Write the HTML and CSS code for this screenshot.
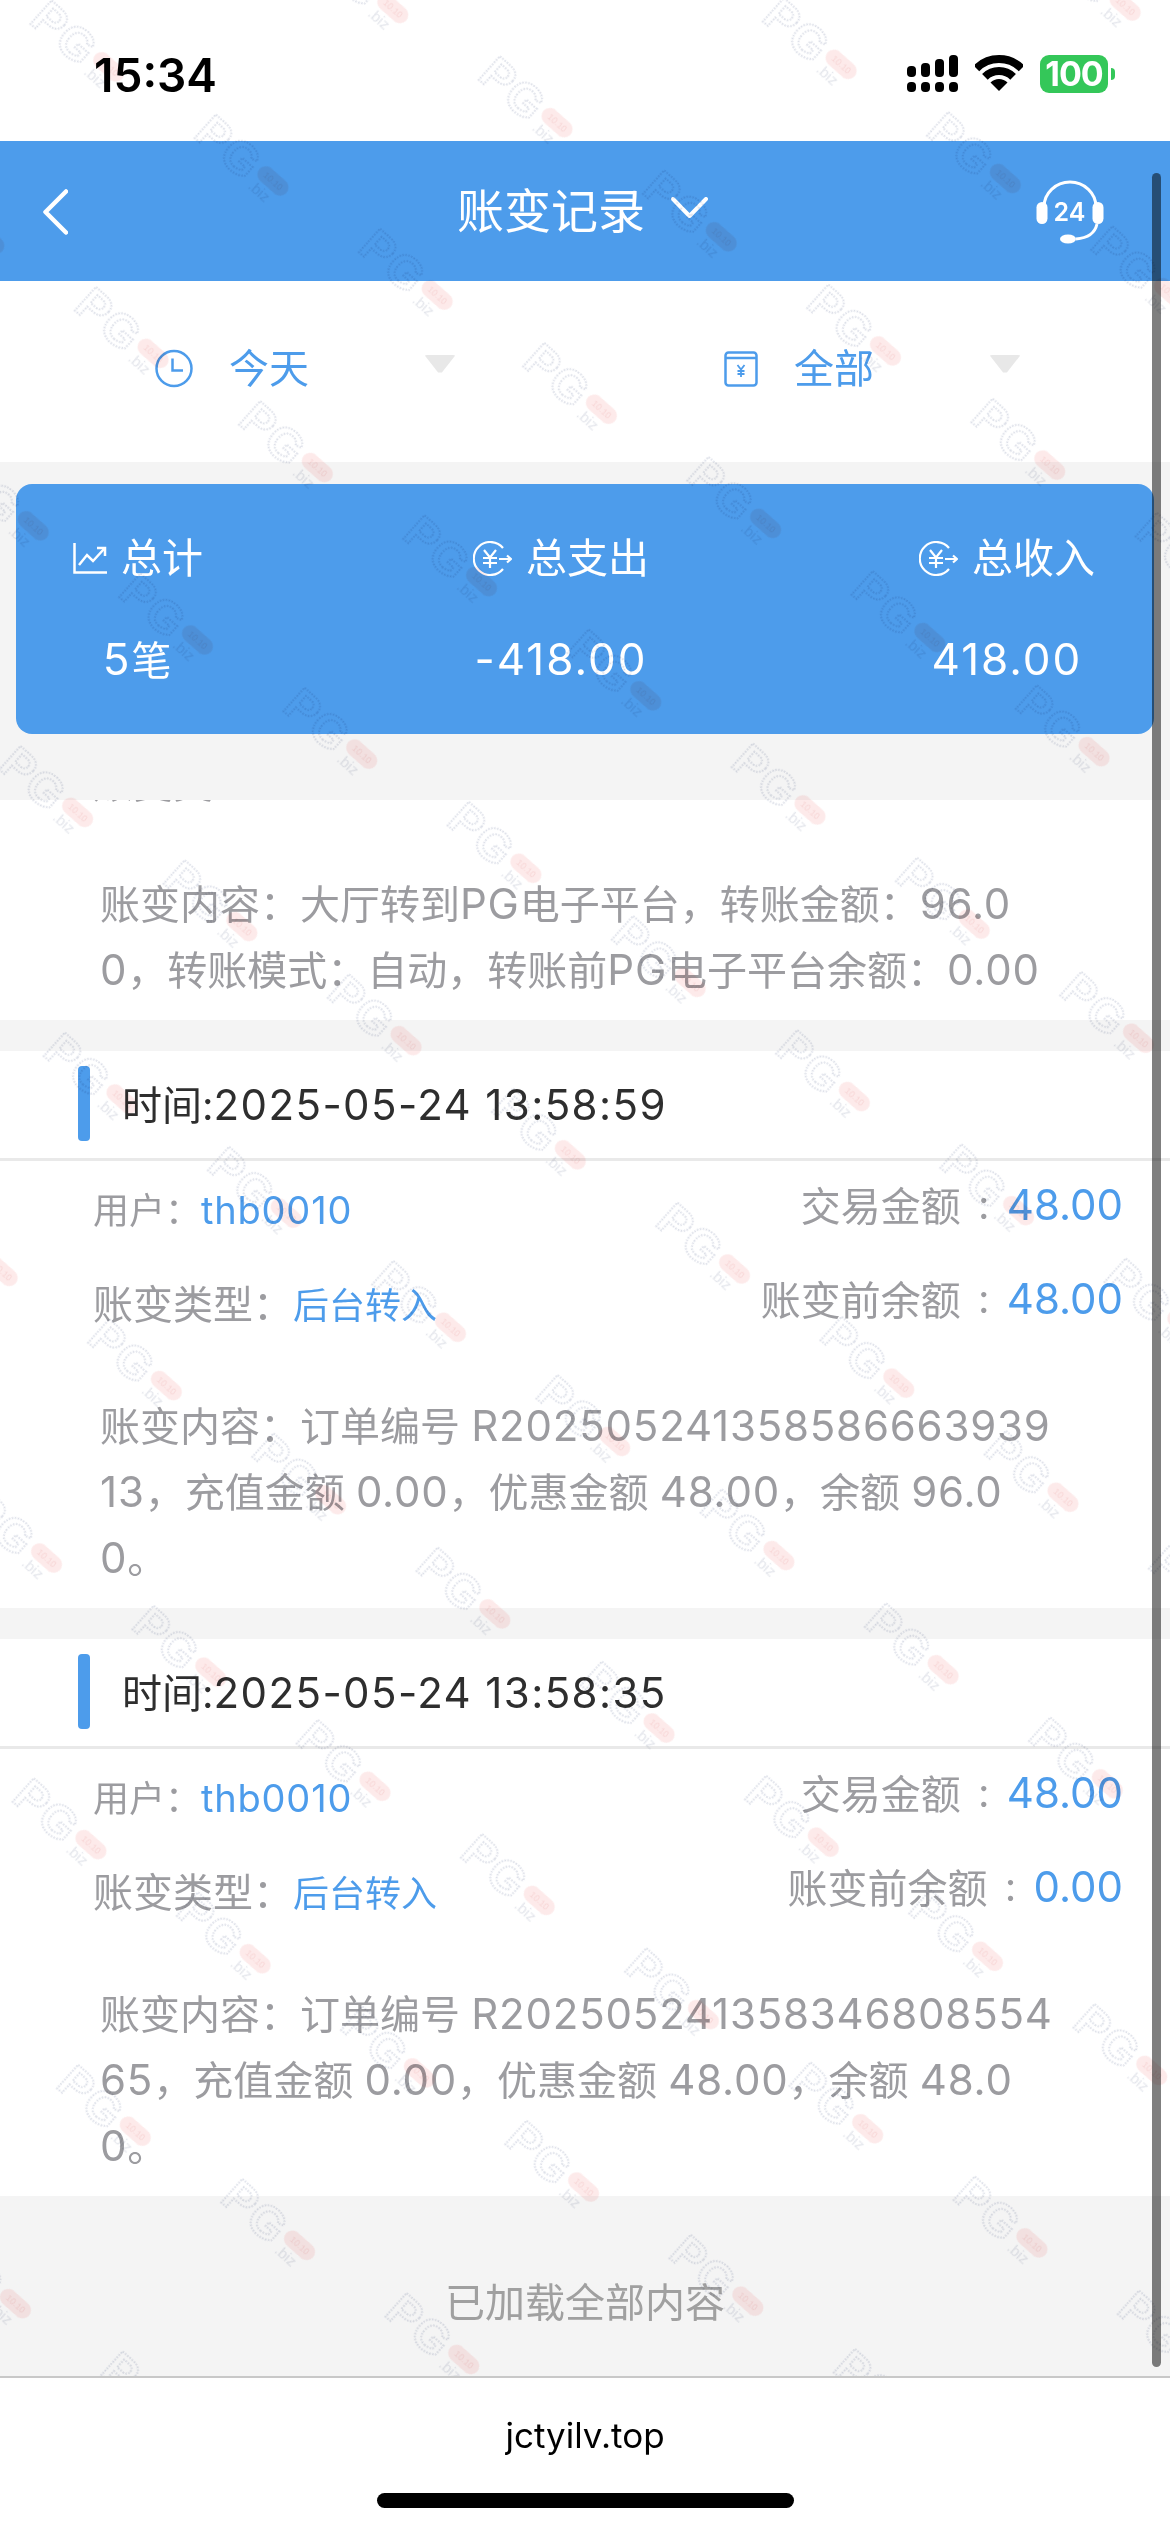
FILE: index.html
```html
<!DOCTYPE html>
<html>
<head>
  <meta charset="UTF-8">
  <meta name="viewport" content="width=device-width, initial-scale=1.0">
  <title>账变记录</title>
  <link rel="stylesheet" href="styles.css">
</head>
<body>
  <div class="phone">
    <div class="status-bar">
      <div class="time">15:34</div>
      <div class="status-icons">
        <svg class="signal" width="51" height="37" viewBox="0 0 51 37" fill="#000">
          <rect x="0" y="11" width="9" height="11" rx="4"/>
          <rect x="14" y="8" width="9" height="14" rx="4"/>
          <rect x="28" y="4" width="9" height="18" rx="4"/>
          <rect x="42" y="0" width="9" height="22" rx="4"/>
          <rect x="0" y="27" width="9" height="10" rx="4"/>
          <rect x="14" y="27" width="9" height="10" rx="4"/>
          <rect x="28" y="27" width="9" height="10" rx="4"/>
          <rect x="42" y="27" width="9" height="10" rx="4"/>
        </svg>
        <svg class="wifi" width="48" height="36" viewBox="0 0 48 36" fill="none" stroke="#000" stroke-width="8">
          <path d="M1.4 13.4A32 32 0 0 1 46.6 13.4"/>
          <path d="M9.9 21.9A20 20 0 0 1 38.1 21.9"/>
          <path d="M24 36L15.5 27.5A12 12 0 0 1 32.5 27.5Z" fill="#000" stroke="none"/>
        </svg>
        <div class="battery">100</div>
        <div class="battery-nub"></div>
      </div>
    </div>

    <div class="header">
      <svg class="back" width="25" height="46" viewBox="0 0 25 46" fill="none" stroke="#fff" stroke-width="4.5" stroke-linecap="round" stroke-linejoin="round">
        <path d="M23 2.5L2.5 23L23 43.5"/>
      </svg>
      <div class="header-title">
        <span>账变记录</span>
        <svg width="37" height="21" viewBox="0 0 37 21" fill="none" stroke="#fff" stroke-width="4" stroke-linecap="round" stroke-linejoin="round">
          <path d="M2 2L18.5 19L35 2"/>
        </svg>
      </div>
      <svg class="support" width="68" height="64" viewBox="0 0 68 64" fill="none" stroke="#fff">
        <path d="M8 32V27A26 25 0 0 1 60 27V32" stroke-width="3"/>
        <rect x="0.5" y="22" width="11" height="22" rx="5.5" fill="#fff" stroke="none"/>
        <rect x="56.5" y="22" width="11" height="22" rx="5.5" fill="#fff" stroke="none"/>
        <path d="M61 44C59 53 52 58 40 59" stroke-width="3"/>
        <ellipse cx="32" cy="59" rx="8" ry="4.5" fill="#fff" stroke="none"/>
        <text x="33.5" y="41" class="support-text">24</text>
      </svg>
    </div>

    <div class="filters">
      <div class="filter">
        <svg width="38" height="39" viewBox="0 0 38 39" fill="none" stroke="#4d9ceb" stroke-width="2.5">
          <circle cx="19" cy="19.5" r="17.5"/>
          <path d="M17.500 9.500V21.500H28"/>
        </svg>
        <span class="filter-text">今天</span>
        <div class="arrow"></div>
      </div>
      <div class="filter">
        <svg width="34" height="36" viewBox="0 0 34 36" fill="none" stroke="#4d9ceb" stroke-width="2.5">
          <rect x="1.500" y="1.500" width="31" height="33" rx="3"/>
          <path d="M1.500 7H32.500"/>
          <path d="M13.500 14L17 18.500L20.500 14M17 18.500V26M13.500 20H20.500M13.500 23H20.500" stroke-width="1.800"/>
        </svg>
        <span class="filter-text">全部</span>
        <div class="arrow"></div>
      </div>
    </div>

    <div class="summary-wrap">
      <div class="summary">
        <div class="summary-col">
          <div class="summary-label">
            <svg width="34" height="31" viewBox="0 0 34 31" fill="none" stroke="#fff" stroke-width="2.500">
              <path d="M1.500 0V29.500H34"/>
              <path d="M6 22L14 12L20 18L31 6"/>
              <path d="M24 5H32V13"/>
            </svg>
            <span>总计</span>
          </div>
          <div class="summary-value">5<span class="unit">笔</span></div>
        </div>
        <div class="summary-col">
          <div class="summary-label">
            <svg width="39" height="35" viewBox="0 0 39 35" fill="none" stroke="#fff" stroke-width="2.200">
              <path d="M30 7A16.500 16.500 0 1 0 30 28"/>
              <path d="M11 9L17 16.500L23 9M17 16.500V27M10 17H24M10 22H24"/>
              <path d="M26 18H37M34 14.500L38 18L34 21.500"/>
            </svg>
            <span>总支出</span>
          </div>
          <div class="summary-value">-418.00</div>
        </div>
        <div class="summary-col">
          <div class="summary-label">
            <svg width="39" height="35" viewBox="0 0 39 35" fill="none" stroke="#fff" stroke-width="2.200">
              <path d="M30 7A16.500 16.500 0 1 0 30 28"/>
              <path d="M11 9L17 16.500L23 9M17 16.500V27M10 17H24M10 22H24"/>
              <path d="M26 18H37M34 14.500L38 18L34 21.500"/>
            </svg>
            <span>总收入</span>
          </div>
          <div class="summary-value">418.00</div>
        </div>
      </div>
    </div>

    <div class="list">
      <div class="card card-cut">
        <div class="cut-label">账变类型：</div>
        <div class="card-content">账变内容：大厅转到<span class="num">PG</span>电子平台，转账金额：<span class="num">96.0</span><br><span class="num">0</span>，转账模式：自动，转账前<span class="num">PG</span>电子平台余额：<span class="num">0.00</span></div>
      </div>

      <div class="card">
        <div class="card-head">
          <div class="accent"></div>
          <div class="card-time">时间:<span class="time-num">2025-05-24 13:58:59</span></div>
        </div>
        <div class="row">
          <div class="row-left"><span class="small-label">用户：</span><span class="user">thb0010</span></div>
          <div class="row-right">交易金额<i>:</i><span class="amount">48.00</span></div>
        </div>
        <div class="row">
          <div class="row-left">账变类型：<span class="blue">后台转入</span></div>
          <div class="row-right">账变前余额<i>:</i><span class="amount">48.00</span></div>
        </div>
        <div class="card-content">账变内容：订单编号 <span class="num">R202505241358586663939</span><br><span class="num">13</span>，充值金额 <span class="num">0.00</span>，优惠金额 <span class="num">48.00</span>，余额 <span class="num">96.0</span><br><span class="num">0</span>。</div>
      </div>

      <div class="card">
        <div class="card-head">
          <div class="accent"></div>
          <div class="card-time">时间:<span class="time-num">2025-05-24 13:58:35</span></div>
        </div>
        <div class="row">
          <div class="row-left"><span class="small-label">用户：</span><span class="user">thb0010</span></div>
          <div class="row-right">交易金额<i>:</i><span class="amount">48.00</span></div>
        </div>
        <div class="row">
          <div class="row-left">账变类型：<span class="blue">后台转入</span></div>
          <div class="row-right">账变前余额<i>:</i><span class="amount">0.00</span></div>
        </div>
        <div class="card-content">账变内容：订单编号 <span class="num">R202505241358346808554</span><br><span class="num">65</span>，充值金额 <span class="num">0.00</span>，优惠金额 <span class="num">48.00</span>，余额 <span class="num">48.0</span><br><span class="num">0</span>。</div>
      </div>

      <div class="load-end">已加载全部内容</div>
    </div>

    <div class="browser-bar">
      <div class="url">jctyilv.top</div>
      <div class="home-bar"></div>
    </div>

    <div class="scrollbar"></div>

    <!-- watermark repeats on a rotated grid over the whole web view -->
    <svg class="watermark" width="1170" height="2376">
      <defs>
        <pattern id="wm" width="200" height="210" patternUnits="userSpaceOnUse" patternTransform="translate(810 810) rotate(34.8) translate(-150 -110)">
          <g transform="translate(150 110) rotate(7)">
            <text x="-90" y="20" class="wm-pg">PG</text>
            <rect x="-18" y="-8.500" width="36" height="17" rx="8.500" fill="#fdeaea"/>
            <text x="-11" y="3" class="wm-pill">10.10</text>
            <text x="-15" y="22" class="wm-biz">.biz</text>
          </g>
        </pattern>
      </defs>
      <rect width="1170" height="2376" fill="url(#wm)"/>
    </svg>
  </div>
</body>
</html>
```

FILE: styles.css
```css
* {
  box-sizing: border-box;
}
body {
  margin: 0;
  font-family: Inter, "Noto Sans CJK SC", sans-serif;
  background: white;
}
.phone {
  position: relative;
  width: 1170px;
  height: 2532px;
  overflow: hidden;
  display: flex;
  flex-direction: column;
}

/* status bar */
.status-bar {
  height: 141px;
  display: flex;
  justify-content: space-between;
  align-items: flex-start;
  padding: 55px 55px 0 94px;
  background: white;
}
.time {
  font-size: 46px;
  font-weight: 600;
  line-height: 40px;
  color: #000;
}
.status-icons {
  display: flex;
  align-items: flex-start;
}
.wifi {
  margin-left: 17px;
}
.battery {
  margin-left: 17px;
  width: 68px;
  height: 38px;
  border-radius: 9px;
  background: #34c759;
  color: white;
  font-size: 34px;
  font-weight: 700;
  letter-spacing: -1px;
  line-height: 38px;
  text-align: center;
}
.battery-nub {
  width: 4px;
  height: 12px;
  margin: 13px 0 0 3px;
  border-radius: 0 6px 6px 0;
  background: #34c759;
}

/* header */
.header {
  height: 140px;
  flex-shrink: 0;
  display: flex;
  align-items: center;
  padding: 0 66px 0 43px;
  background: #4d9ceb;
  color: white;
}
.back {
  margin-top: 1px;
}
.header-title {
  flex: 1;
  display: flex;
  justify-content: center;
  align-items: center;
  gap: 26px;
  font-size: 47px;
  padding: 0 0 8px 61px;
}
.support {
  margin-top: 1px;
}
.support-text {
  font-size: 25px;
  font-weight: 600;
  fill: white;
  stroke: none;
  text-anchor: middle;
}

/* filter row */
.filters {
  height: 181px;
  display: grid;
  grid-template-columns: 569px 1fr;
  padding-left: 155px;
  background: white;
}
.filter {
  display: flex;
  align-items: center;
  color: #4d9ceb;
  font-size: 40px;
  padding-bottom: 6px;
}
.filter-text {
  margin-left: 36px;
  line-height: 60px;
  margin-right: 115px;
}
.arrow {
  width: 32px;
  height: 18px;
  margin-bottom: 10px;
  background: #e8e8e8;
  clip-path: polygon(0 0, 100% 0, 56% 100%, 44% 100%);
  border-radius: 3px;
}

/* summary card */
.summary-wrap {
  height: 338px;
  padding: 22px 16px 0;
  background: #f4f4f4;
}
.summary {
  height: 250px;
  padding: 44px 59px 0 57px;
  display: flex;
  justify-content: space-between;
  border-radius: 16px;
  background: #4d9ceb;
  color: white;
}
.summary-col {
  display: flex;
  flex-direction: column;
  align-items: center;
  gap: 41px;
}
.summary-label {
  display: flex;
  align-items: center;
  gap: 14px;
  font-size: 41px;
  line-height: 60px;
}
.summary-value {
  font-size: 44px;
  letter-spacing: 2px;
  line-height: 60px;
}
.unit {
  font-size: 40px;
}

/* records */
.list {
  flex: 1;
  display: flex;
  flex-direction: column;
  gap: 31px;
  background: #f4f4f4;
}
.card {
  background: white;
}
.card-cut {
  height: 220px;
  flex-shrink: 0;
  overflow: hidden;
  display: flex;
  flex-direction: column;
  justify-content: flex-end;
}
.cut-label {
  padding-left: 93px;
  font-size: 40px;
  line-height: 60px;
  margin-bottom: 17px;
  color: #9c9ca0;
  flex-shrink: 0;
}
.card-head {
  height: 110px;
  display: flex;
  align-items: center;
  padding: 0 0 3px 78px;
  border-bottom: 3px solid #e9e9e9;
}
.accent {
  width: 12px;
  height: 75px;
  border-radius: 4px;
  background: #4d9ceb;
}
.card-time {
  margin-left: 32px;
  font-size: 40px;
  color: #2e2e2e;
}
.time-num {
  font-size: 42px;
  letter-spacing: 1.4px;
}
.row {
  height: 94px;
  display: flex;
  justify-content: space-between;
  align-items: center;
  padding: 0 47px 0 93px;
  font-size: 40px;
  color: #9c9ca0;
}
.row:nth-of-type(2) {
  margin-top: 4px;
}
.row-left {
  padding-bottom: 8px;
}
.row-right {
  display: flex;
  align-items: center;
  padding-bottom: 16px;
}
.row-right i {
  font-style: normal;
  width: 46px;
  text-align: center;
}
.small-label {
  font-size: 36px;
}
.blue {
  font-size: 36px;
  color: #4d9ceb;
}
.user {
  font-size: 38px;
  letter-spacing: 0.8px;
  color: #4d9ceb;
}
.amount {
  font-size: 42px;
  color: #4d9ceb;
}
.card-content {
  padding: 41px 0 16px 100px;
  font-size: 40px;
  line-height: 66px;
  color: #9c9ca0;
  white-space: nowrap;
}
.num {
  font-size: 42px;
  line-height: 1;
  letter-spacing: 0.8px;
}
.load-end {
  flex: 1;
  margin-top: -31px;
  padding-top: 77px;
  text-align: center;
  font-size: 40px;
  line-height: 60px;
  color: #a0a0a0;
}

/* browser bar */
.browser-bar {
  height: 156px;
  flex-shrink: 0;
  border-top: 2px solid #c8c8c8;
  background: white;
  display: flex;
  flex-direction: column;
  align-items: center;
}
.url {
  margin-top: 35px;
  font-size: 35px;
  line-height: 44px;
  color: #000;
}
.home-bar {
  width: 417px;
  height: 15px;
  margin-top: 36px;
  border-radius: 8px;
  background: #000;
}

/* overlays */
.scrollbar {
  position: absolute;
  top: 173px;
  right: 9px;
  width: 9px;
  height: 2194px;
  border-radius: 5px;
  background: rgba(0, 0, 0, 0.5);
}
.watermark {
  position: absolute;
  top: 0;
  left: 0;
  pointer-events: none;
  mix-blend-mode: multiply;
}
.wm-pg {
  font-family: "Liberation Sans", sans-serif;
  font-size: 46px;
  font-weight: 700;
  letter-spacing: 2px;
  fill: none;
  stroke: #dcdfe8;
  stroke-width: 2;
  stroke-dasharray: 1.5 1.5;
}
.wm-pill {
  font-family: "Liberation Sans", sans-serif;
  font-size: 9px;
  fill: #f8d6d6;
}
.wm-biz {
  font-family: "Liberation Sans", sans-serif;
  font-size: 15px;
  fill: #e4e6ec;
}
```
